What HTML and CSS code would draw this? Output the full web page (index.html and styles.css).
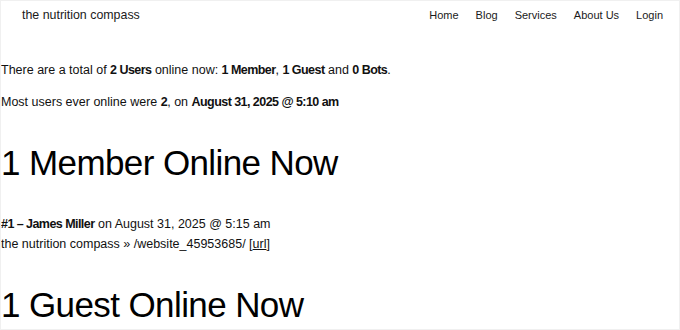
FILE: index.html
```html
<!DOCTYPE html>
<html>
<head>
<meta charset="utf-8">
<link rel="stylesheet" href="styles.css">
</head>
<body>
<div class="frame">
  <header class="site-header">
    <div class="site-title">the nutrition compass</div>
    <nav class="nav">
      <a>Home</a>
      <a>Blog</a>
      <a>Services</a>
      <a>About Us</a>
      <a>Login</a>
    </nav>
  </header>
  <main class="content">
    <p class="stat">There are a total of <b>2 Users</b> online now: <b>1 Member</b>, <b>1 Guest</b> and <b>0 Bots</b>.</p>
    <p class="stat">Most users ever online were <b>2</b>, on <b>August 31, 2025 @ 5:10 am</b></p>
    <h2 class="section-title">1 Member Online Now</h2>
    <div class="entry">
      <div><b>#1 – James Miller</b> on August 31, 2025 @ 5:15 am</div>
      <div>the nutrition compass » /website_45953685/ [<span class="u">url</span>]</div>
    </div>
    <h2 class="section-title">1 Guest Online Now</h2>
  </main>
</div>
</body>
</html>
```
FILE: styles.css
```css
html, body {
  margin: 0;
  padding: 0;
  background: #fff;
}
body {
  font-family: "Liberation Sans", Arial, sans-serif;
  color: #111;
  font-size: 12.5px;
}
.frame {
  box-sizing: border-box;
  width: 680px;
  height: 330px;
  overflow: hidden;
  border: 1px solid #f0f0f0;
}
.site-header {
  display: flex;
  justify-content: space-between;
  align-items: center;
  padding: 4px 16px 0 21px;
  height: 20px;
}
.site-title {
  font-size: 12.4px;
  color: #1a1a1a;
}
.nav {
  display: flex;
  gap: 17px;
  font-size: 11px;
  color: #1a1a1a;
}
.content {
  padding-top: 35px;
}
.stat {
  margin: 0 0 12px 0;
  line-height: 20px;
}
.stat b, .entry b {
  font-weight: 700;
  letter-spacing: -0.55px;
}
.section-title {
  font-weight: 400;
  font-size: 35px;
  margin: 31px 0 31px;
  line-height: 40px;
  letter-spacing: -0.6px;
  color: #000;
}
.entry div {
  line-height: 20px;
}
.u {
  text-decoration: underline;
}
```
